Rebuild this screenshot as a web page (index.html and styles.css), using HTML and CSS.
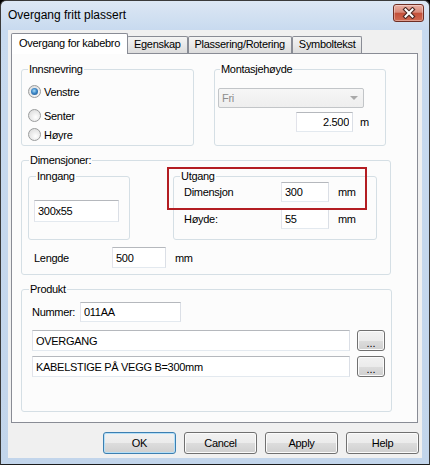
FILE: index.html
```html
<!DOCTYPE html>
<html>
<head>
<meta charset="utf-8">
<title>Overgang fritt plassert</title>
<link rel="stylesheet" href="styles.css">
</head>
<body>
<div class="window">
  <div class="titlebar">
    <span class="title">Overgang fritt plassert</span>
    <div class="close">
      <svg width="14" height="12" viewBox="0 0 14 12">
        <path d="M3.5 2.5 L10.5 9.5 M10.5 2.5 L3.5 9.5" stroke="#4b2722" stroke-width="4.2" stroke-linecap="square" fill="none"/>
        <path d="M3.5 2.5 L10.5 9.5 M10.5 2.5 L3.5 9.5" stroke="#ffffff" stroke-width="2" stroke-linecap="square" fill="none"/>
      </svg>
    </div>
  </div>
  <div class="client">
    <div class="tabs">
      <div class="tab active">Overgang for kabebro</div>
      <div class="tab">Egenskap</div>
      <div class="tab">Plassering/Rotering</div>
      <div class="tab">Symboltekst</div>
    </div>
    <div class="panel">
      <div class="row1">
        <fieldset class="grp g-inn">
          <legend class="lg6">Innsnevring</legend>
          <div class="radio r1"><span class="rb checked"></span>Venstre</div>
          <div class="radio r2"><span class="rb"></span>Senter</div>
          <div class="radio r3"><span class="rb"></span>Høyre</div>
        </fieldset>
        <fieldset class="grp g-mont">
          <legend class="lg5">Montasjehøyde</legend>
          <div class="combo"><span>Fri</span><span class="arrow"></span></div>
          <div class="mrow">
            <input class="tb w57 right" type="text" value="2.500">
            <span class="unit7">m</span>
          </div>
        </fieldset>
      </div>

      <fieldset class="grp g-dim">
        <legend class="lg7">Dimensjoner:</legend>
        <div class="dimrow">
          <fieldset class="grp g-sub">
            <legend class="lg7">Inngang</legend>
            <input class="tb w85 h22 blk" type="text" value="300x55">
          </fieldset>
          <div class="hl">
            <fieldset class="grp g-utg">
              <legend class="lg6">Utgang</legend>
              <div class="ugrid">
                <span>Dimensjon</span>
                <input class="tb w48" type="text" value="300">
                <span class="unit9">mm</span>
                <span>Høyde:</span>
                <input class="tb w48" type="text" value="55">
                <span class="unit9">mm</span>
              </div>
            </fieldset>
            <div class="redbox"></div>
          </div>
        </div>
        <div class="lrow">
          <span class="lab78">Lengde</span>
          <input class="tb w54 h21" type="text" value="500">
          <span class="unit9">mm</span>
        </div>
      </fieldset>

      <fieldset class="grp g-prod">
        <legend class="lg7">Produkt</legend>
        <div class="nrow">
          <span class="lab48">Nummer:</span>
          <input class="tb w101" type="text" value="011AA">
        </div>
        <div class="prow p1">
          <input class="tb w318 h21" type="text" value="OVERGANG">
          <button class="btn dots">...</button>
        </div>
        <div class="prow p2">
          <input class="tb w318 h21" type="text" value="KABELSTIGE PÅ VEGG B=300mm">
          <button class="btn dots">...</button>
        </div>
      </fieldset>
    </div>
    <div class="buttons">
      <button class="btn big default">OK</button>
      <button class="btn big">Cancel</button>
      <button class="btn big">Apply</button>
      <button class="btn big">Help</button>
    </div>
  </div>
</div>
</body>
</html>
```
FILE: styles.css
```css
* { box-sizing: border-box; }
html, body { margin: 0; padding: 0; }
body {
  width: 430px;
  height: 465px;
  overflow: hidden;
  background: #000;
  font-family: "Liberation Sans", Arial, sans-serif;
  font-size: 11px;
  letter-spacing: -0.3px;
  color: #000;
}

.window {
  width: 430px;
  height: 465px;
  border: 1px solid #3a3a3a;
  border-bottom-color: #1c1c1c;
  border-radius: 6px 6px 0 0;
  background: linear-gradient(180deg, #dce7f4 0, #c8daef 29px, #c2d5eb 100%);
  display: flex;
  flex-direction: column;
}

.titlebar {
  height: 29px;
  flex: none;
  display: flex;
  justify-content: space-between;
  align-items: flex-start;
  padding: 0 5px 0 7px;
}
.title { font-size: 12px; line-height: 29px; letter-spacing: 0; color: #000; }
.close {
  margin-top: 3px;
  width: 31px;
  height: 18px;
  border: 1px solid #6e2e24;
  border-radius: 3px;
  background: linear-gradient(180deg, #ebb0a4 0, #d88a7a 45%, #c4503a 52%, #d06a52 100%);
  box-shadow: inset 0 0 0 1px rgba(255,255,255,0.35);
  display: flex;
  align-items: center;
  justify-content: center;
}

.client {
  margin: 0 7px;
  height: 428px;
  flex: none;
  background: #f0f0f0;
  padding: 3px 4px 0 3px;
}

.tabs {
  display: flex;
  height: 20px;
  align-items: flex-end;
}
.tab {
  height: 17px;
  line-height: 15px;
  padding: 0 6px;
  border: 1px solid #898c95;
  border-bottom: none;
  border-radius: 2px 2px 0 0;
  background: linear-gradient(180deg, #f4f4f4 0, #e9e9e9 50%, #dcdcdc 100%);
  white-space: nowrap;
}
.tab.active {
  height: 21px;
  line-height: 19px;
  margin-bottom: -1px;
  margin-right: -1px;
  padding: 0 7px;
  background: #ffffff;
  position: relative;
  z-index: 1;
}

.panel {
  height: 370px;
  border: 1px solid #898c95;
  background: #fcfcfc;
  padding: 9px 0 0 9px;
}

.row1 { display: flex; gap: 20px; }

.grp {
  margin: 0;
  padding: 0;
  border: 1px solid #d5dfe5;
  border-radius: 3px;
  min-width: 0;
}
.grp > legend {
  padding: 0 1px;
  line-height: 13px;
  height: 13px;
}
.lg5 { margin-left: 5px; }
.lg6 { margin-left: 6px; }
.lg7 { margin-left: 7px; }

.g-inn { width: 173px; height: 83px; }
.g-mont { width: 172px; height: 83px; }

.radio {
  display: flex;
  align-items: center;
  height: 13px;
  margin-left: 6px;
}
.r1 { margin-top: 9px; }
.r2 { margin-top: 11px; }
.r3 { margin-top: 6px; }
.rb {
  width: 13px;
  height: 13px;
  border-radius: 50%;
  border: 1px solid #9a9c9d;
  background: radial-gradient(circle at 60% 65%, #ffffff 0, #f0f0f0 35%, #d6d6d6 100%);
  margin-right: 3px;
  flex: none;
}
.rb.checked::after {
  content: "";
  display: block;
  width: 7px;
  height: 7px;
  margin: 2px;
  border-radius: 50%;
  background: radial-gradient(circle at 45% 40%, #a6dcf8 0, #3c86c6 45%, #1a4f86 100%);
}

.combo {
  margin: 12px 0 0 3px;
  width: 146px;
  height: 20px;
  border: 1px solid #c2c5c8;
  border-radius: 2px;
  background: linear-gradient(180deg, #f6f6f6, #eeeeee);
  color: #8d8d8d;
  display: flex;
  align-items: center;
  justify-content: space-between;
  padding: 0 5px 0 3px;
}
.arrow {
  width: 0;
  height: 0;
  border-left: 4px solid transparent;
  border-right: 4px solid transparent;
  border-top: 4px solid #a9a9a9;
}
.mrow {
  display: flex;
  align-items: center;
  margin: 4px 0 0 81px;
}

.tb {
  font: inherit;
  letter-spacing: -0.3px;
  color: #000;
  height: 20px;
  margin: 0;
  border: 1px solid;
  border-color: #b5b8bd #dbdfe6 #e3e9ef #e2e3ea;
  background: #fff;
  padding: 0 3px;
  outline: none;
  border-radius: 0;
}
.right { text-align: right; }
.blk { display: block; }
.w48 { width: 48px; }
.w54 { width: 54px; }
.w57 { width: 57px; }
.w85 { width: 85px; }
.w101 { width: 101px; }
.w318 { width: 318px; }
.h21 { height: 21px; }
.h22 { height: 22px; }
.unit7 { margin-left: 7px; }
.unit9 { margin-left: 9px; }

.g-dim { width: 370px; height: 121px; margin-top: 8px; }
.dimrow { display: flex; margin: 3px 0 0 6px; }
.g-sub { width: 102px; height: 70px; }
.g-sub .tb { margin: 17px 0 0 5px; }
.hl { position: relative; margin-left: 43px; }
.g-utg { width: 204px; height: 70px; }
.ugrid {
  display: grid;
  grid-template-columns: 97px 48px auto;
  row-gap: 7px;
  align-items: center;
  padding-left: 10px;
  margin-top: -1px;
}
.redbox {
  position: absolute;
  left: -6px;
  top: -3px;
  width: 200px;
  height: 43px;
  border: 2px solid #b31d22;
}
.lrow {
  display: flex;
  align-items: center;
  margin: 7px 0 0 12px;
}
.lab78 { width: 78px; }

.g-prod { width: 371px; height: 129px; margin-top: 8px; }
.nrow {
  display: flex;
  align-items: center;
  margin: 6px 0 0 10px;
}
.lab48 { width: 48px; }
.prow {
  display: flex;
  align-items: center;
  margin-left: 10px;
}
.p1 { margin-top: 8px; }
.p2 { margin-top: 5px; }

.btn {
  font: inherit;
  letter-spacing: -0.3px;
  color: #000;
  margin: 0;
  padding: 0;
  border: 1px solid #707070;
  border-radius: 3px;
  background: linear-gradient(180deg, #f2f2f2 0, #ebebeb 50%, #dddddd 50%, #cfcfcf 100%);
  box-shadow: inset 0 0 0 1px #fbfbfb;
}
.dots {
  width: 28px;
  height: 21px;
  margin-left: 7px;
  line-height: 11px;
  padding-top: 5px;
  letter-spacing: 0;
}
.buttons {
  display: flex;
  justify-content: flex-end;
  gap: 8px;
  margin: 9px -1px 0 0;
}
.big { width: 73px; height: 22px; }
.btn.default {
  border-color: #3c7fb1;
  box-shadow: inset 0 0 0 1px #b5dff7;
}
```
